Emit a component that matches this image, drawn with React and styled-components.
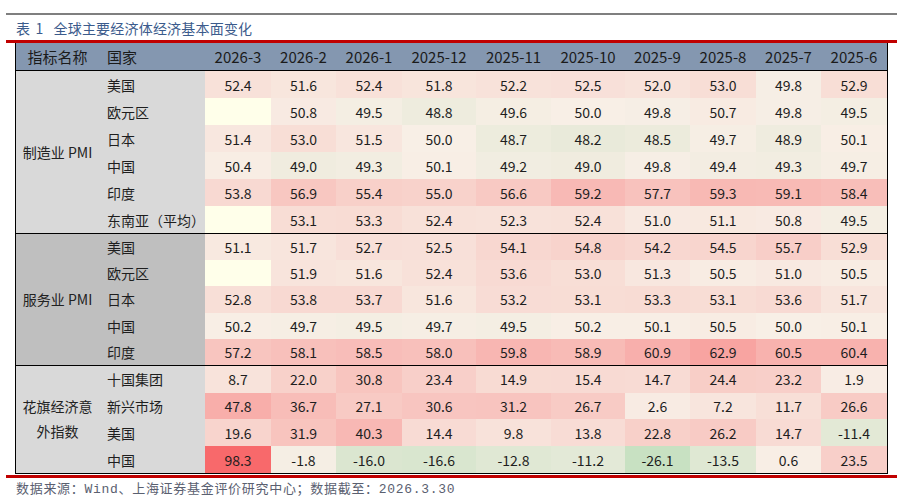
import React from "react";
import styled, { createGlobalStyle } from "styled-components";

const GlobalStyle = createGlobalStyle`
  html, body { margin: 0; padding: 0; background: #ffffff; }
  body { font-family: "Noto Sans CJK SC", "Noto Sans", sans-serif; }
  * { box-sizing: border-box; }
`;

const COLS = "83px 106px 66px 65px 66px 74px 75px 74px 65px 66px 65px 66px";

const Page = styled.div`
  width: 918px;
  height: 502px;
  padding: 13px 21px 0 6px;
`;

const TopRule = styled.div`
  height: 2px;
  background: #7f7f7f;
`;

const Title = styled.div`
  display: flex;
  align-items: center;
  height: 25px;
  padding-left: 10px;
  font-size: 14px;
  color: #3b5b8c;
  white-space: pre;
  letter-spacing: 0.2px;
`;

const TitleNum = styled.span`
  margin-right: 10px;
  word-spacing: 2px;
`;

const RedRule = styled.div`
  height: ${(p) => p.$h || 3}px;
  margin-top: ${(p) => p.$mt || 0}px;
  background: #c00000;
`;

const Table = styled.div`
  margin-left: 9px;
  width: 873px;
  border-left: 1px solid #000;
  border-right: 1px solid #000;
  border-bottom: 1px solid #000;
`;

const HeaderRow = styled.div`
  display: grid;
  grid-template-columns: ${COLS};
  height: 27px;
  background: #8497b0;
  font-size: 15px;
  color: #1b1b1b;
`;

const HeadCell = styled.div`
  display: flex;
  align-items: center;
  justify-content: ${(p) => (p.$left ? "flex-start" : "center")};
  padding-left: ${(p) => (p.$left ? "8px" : "0")};
  white-space: nowrap;
`;

const Block = styled.div`
  display: grid;
  grid-template-columns: ${COLS};
  grid-auto-rows: ${(p) => p.$rowH}px;
  border-top: 1px solid #000;
  font-size: 14px;
  color: #1e1e1e;
`;

const Label = styled.div`
  grid-column: 1;
  grid-row: 1 / span ${(p) => p.$span};
  background: ${(p) => p.$bg};
  display: flex;
  align-items: center;
  justify-content: center;
  text-align: center;
  line-height: 25px;
  white-space: pre;
  color: #222;
`;

const Country = styled.div`
  grid-column: 2;
  background: ${(p) => p.$bg};
  display: flex;
  align-items: center;
  padding-left: 8px;
  white-space: nowrap;
`;

const Cell = styled.div`
  display: flex;
  align-items: center;
  justify-content: center;
`;

const Footer = styled.div`
  padding: 3px 0 0 10px;
  font-family: "Liberation Mono", "Noto Sans CJK SC", monospace;
  font-size: 13px;
  letter-spacing: 0.7px;
  color: #5a6070;
  line-height: 18px;
`;

const CREAM = [248, 239, 230];
const RED = [248, 105, 107];
const GREEN = [198, 223, 190];

const mix = (a, b, t) =>
  `rgb(${a.map((x, i) => Math.round(x + (b[i] - x) * t)).join(",")})`;

const colorFor = (v, kind) => {
  if (v === null) return "#ffffea";
  if (kind === "pmi") {
    if (v >= 50) return mix(CREAM, RED, Math.min(1, (v - 50) / 23));
    return mix(CREAM, GREEN, Math.min(1, (50 - v) / 6));
  }
  if (v >= 0) return mix(CREAM, RED, Math.min(1, v / 98.3));
  return mix(CREAM, [200, 225, 194], Math.min(1, -v / 26.1));
};

const months = ["2026-3", "2026-2", "2026-1", "2025-12", "2025-11", "2025-10", "2025-9", "2025-8", "2025-7", "2025-6"];

const blocks = [
  {
    label: "制造业 PMI",
    bg: "#d9d9d9",
    kind: "pmi",
    rowH: 27,
    rows: [
      ["美国", [52.4, 51.6, 52.4, 51.8, 52.2, 52.5, 52.0, 53.0, 49.8, 52.9]],
      ["欧元区", [null, 50.8, 49.5, 48.8, 49.6, 50.0, 49.8, 50.7, 49.8, 49.5]],
      ["日本", [51.4, 53.0, 51.5, 50.0, 48.7, 48.2, 48.5, 49.7, 48.9, 50.1]],
      ["中国", [50.4, 49.0, 49.3, 50.1, 49.2, 49.0, 49.8, 49.4, 49.3, 49.7]],
      ["印度", [53.8, 56.9, 55.4, 55.0, 56.6, 59.2, 57.7, 59.3, 59.1, 58.4]],
      ["东南亚（平均）", [null, 53.1, 53.3, 52.4, 52.3, 52.4, 51.0, 51.1, 50.8, 49.5]],
    ],
  },
  {
    label: "服务业 PMI",
    bg: "#bfbfbf",
    kind: "pmi",
    rowH: 26.2,
    rows: [
      ["美国", [51.1, 51.7, 52.7, 52.5, 54.1, 54.8, 54.2, 54.5, 55.7, 52.9]],
      ["欧元区", [null, 51.9, 51.6, 52.4, 53.6, 53.0, 51.3, 50.5, 51.0, 50.5]],
      ["日本", [52.8, 53.8, 53.7, 51.6, 53.2, 53.1, 53.3, 53.1, 53.6, 51.7]],
      ["中国", [50.2, 49.7, 49.5, 49.7, 49.5, 50.2, 50.1, 50.5, 50.0, 50.1]],
      ["印度", [57.2, 58.1, 58.5, 58.0, 59.8, 58.9, 60.9, 62.9, 60.5, 60.4]],
    ],
  },
  {
    label: "花旗经济意\n外指数",
    bg: "#d9d9d9",
    kind: "citi",
    rowH: 26.75,
    rows: [
      ["十国集团", [8.7, 22.0, 30.8, 23.4, 14.9, 15.4, 14.7, 24.4, 23.2, 1.9]],
      ["新兴市场", [47.8, 36.7, 27.1, 30.6, 31.2, 26.7, 2.6, 7.2, 11.7, 26.6]],
      ["美国", [19.6, 31.9, 40.3, 14.4, 9.8, 13.8, 22.8, 26.2, 14.7, -11.4]],
      ["中国", [98.3, -1.8, -16.0, -16.6, -12.8, -11.2, -26.1, -13.5, 0.6, 23.5]],
    ],
  },
];

export default function App() {
  return (
    <>
      <GlobalStyle />
      <Page>
        <TopRule />
        <Title>
          <TitleNum>表 1</TitleNum>
          全球主要经济体经济基本面变化
        </Title>
        <RedRule $h={3} />
        <Table>
          <HeaderRow>
            <HeadCell>指标名称</HeadCell>
            <HeadCell $left>国家</HeadCell>
            {months.map((m) => (
              <HeadCell key={m}>{m}</HeadCell>
            ))}
          </HeaderRow>
          {blocks.map((b) => (
            <Block key={b.label} $rowH={b.rowH}>
              <Label $span={b.rows.length} $bg={b.bg}>
                {b.label}
              </Label>
              {b.rows.map(([name, vals]) => (
                <React.Fragment key={name}>
                  <Country $bg={b.bg}>{name}</Country>
                  {vals.map((v, i) => (
                    <Cell key={i} style={{ background: colorFor(v, b.kind) }}>
                      {v === null ? "" : v.toFixed(1)}
                    </Cell>
                  ))}
                </React.Fragment>
              ))}
            </Block>
          ))}
        </Table>
        <RedRule $h={3} $mt={1} />
        <Footer>数据来源：Wind、上海证券基金评价研究中心；数据截至：2026.3.30</Footer>
      </Page>
    </>
  );
}
